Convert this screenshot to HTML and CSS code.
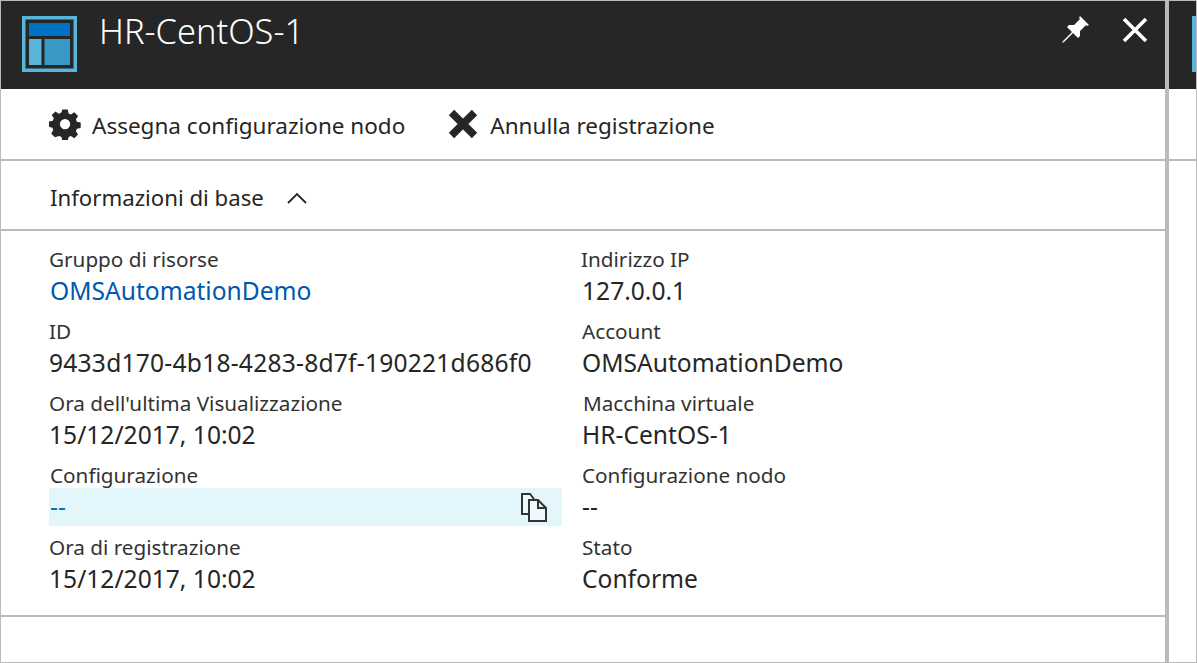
FILE: index.html
```html
<!DOCTYPE html>
<html lang="it">
<head>
  <meta charset="UTF-8" />
  <meta name="viewport" content="width=device-width, initial-scale=1" />
  <title>HR-CentOS-1</title>
  <link rel="stylesheet" href="styles.css">
</head>
<body>
  <div class="desk">
    <div class="blade">
      <header class="blade-head">
        <svg class="blade-logo" width="55" height="56" viewBox="0 0 55 56">
          <rect width="55" height="56" fill="#59b4d9"/>
          <rect x="3.500" y="3.500" width="48" height="49" fill="#262626"/>
          <rect x="7" y="7" width="41" height="13" fill="#0072c6"/>
          <rect x="7" y="23" width="12.500" height="26" fill="#59b4d9"/>
          <rect x="22.500" y="23" width="25.500" height="26" fill="#3999c6"/>
        </svg>
        <h1 class="blade-title">HR-CentOS-1</h1>
        <svg class="head-btn pin" width="28" height="28" viewBox="0 0 28 28">
          <path fill="#fff" d="M18 1l9 9-2 1-1-1-6 6 0 5-2 2-5-5-9 9-2 1 1-2 9-9-5-5 2-2 5 0 6-6-1-1z"/>
        </svg>
        <svg class="head-btn close" width="26" height="26" viewBox="0 0 26 26">
          <path stroke="#fff" stroke-width="3.600" d="M2 2l22 22M24 2L2 24"/>
        </svg>
      </header>

      <div class="commands">
        <button class="cmd">
          <svg width="32" height="32" viewBox="0 0 32 32">
            <path fill="#262626" fill-rule="evenodd" d="M13 0h6l1 4.300 2.600 1.100L26.400 3l4.200 4.200-2.400 3.800 1.100 2.600 4.300 1v6l-4.300 1-1.100 2.600 2.400 3.800-4.200 4.200-3.800-2.400-2.600 1.100-1 4.300h-6l-1-4.300-2.600-1.100L4.600 31 .4 26.800l2.400-3.800-1.100-2.600L-2 19.400v-6l4.300-1 1.100-2.600L1 6l4.200-3.800 3.800 2.400 2.600-1.100z M16 10.500a5.800 5.800 0 1 0 0 11.600a5.800 5.800 0 1 0 0-11.600z" transform="translate(1.800 1.600) scale(.89)"/>
          </svg>
          <span class="cmd-text">Assegna configurazione nodo</span>
        </button>
        <button class="cmd">
          <svg width="32" height="32" viewBox="0 0 32 32">
            <path stroke="#262626" stroke-width="7.500" d="M4.500 4.500l23 23M27.500 4.500l-23 23"/>
          </svg>
          <span class="cmd-text">Annulla registrazione</span>
        </button>
      </div>

      <div class="section-head">
        <span>Informazioni di base</span>
        <svg width="22" height="14" viewBox="0 0 22 14">
          <path fill="none" stroke="#262626" stroke-width="1.800" d="M2 12l9-9 9 9"/>
        </svg>
      </div>

      <div class="props">
        <div class="prop">
          <div class="lbl">Gruppo di risorse</div>
          <div class="val link nudge">OMSAutomationDemo</div>
        </div>
        <div class="prop">
          <div class="lbl back">Indirizzo IP</div>
          <div class="val">127.0.0.1</div>
        </div>
        <div class="prop">
          <div class="lbl">ID</div>
          <div class="val wide">9433d170-4b18-4283-8d7f-190221d686f0</div>
        </div>
        <div class="prop">
          <div class="lbl">Account</div>
          <div class="val">OMSAutomationDemo</div>
        </div>
        <div class="prop">
          <div class="lbl">Ora dell'ultima Visualizzazione</div>
          <div class="val">15/12/2017, 10:02</div>
        </div>
        <div class="prop">
          <div class="lbl nudge">Macchina virtuale</div>
          <div class="val">HR-CentOS-1</div>
        </div>
        <div class="prop">
          <div class="lbl nudge">Configurazione</div>
          <div class="val link hilite">
            <span>--</span>
            <svg width="30" height="30" viewBox="0 0 30 30">
              <path fill="#fff" fill-opacity=".4" stroke="#333" stroke-width="2" d="M9 22H2V2h8l4 5"/>
              <path fill="#fff" fill-opacity=".4" stroke="#333" stroke-width="2" d="M9 8h9l8 8v13H9z"/>
              <path fill="none" stroke="#333" stroke-width="2" d="M18 8v8h8"/>
            </svg>
          </div>
        </div>
        <div class="prop">
          <div class="lbl">Configurazione nodo</div>
          <div class="val">--</div>
        </div>
        <div class="prop">
          <div class="lbl">Ora di registrazione</div>
          <div class="val">15/12/2017, 10:02</div>
        </div>
        <div class="prop">
          <div class="lbl">Stato</div>
          <div class="val">Conforme</div>
        </div>
      </div>
    </div>

    <div class="next-blade">
      <div class="next-head"><div class="next-logo"></div></div>
      <div class="next-commands"></div>
    </div>
  </div>
</body>
</html>
```

FILE: styles.css
```css
html, body { margin:0; padding:0; height:100%; overflow:hidden; }
body { background:#fff; color:#262626; font-family:"Noto Sans", "Open Sans", sans-serif; }
.desk { display:flex; box-sizing:border-box; height:663px; border:1px solid #bbb; }
.blade { width:1164px; flex:none; }
.next-blade { flex:1; border-left:4px solid #bbb; overflow:hidden; }
.next-head { height:88px; margin-left:-4px; border-left:4px solid #505050; background:#262626; padding-top:15px; box-sizing:border-box; overflow:hidden; }
.next-logo { width:56px; height:56px; margin-left:23px; background:#59b4d9; }
.next-commands { height:70px; border-bottom:2px solid #bbb; }

.blade-head { display:flex; align-items:flex-start; height:88px; background:#262626; }
.blade-logo { margin:15px 0 0 21px; flex:none; }
.blade-title { margin:7px auto 0 22px; font-size:34.400px; font-weight:300; line-height:46px; color:#fff; }
.head-btn { flex:none; margin-top:14px; }
.pin { margin-right:32px; }
.close { margin:16px 17px 0 0; }

.commands { display:flex; align-items:center; height:70px; padding-left:48px; gap:42px; border-bottom:2px solid #bbb; }
.cmd { display:flex; align-items:center; gap:11px; padding:0; border:none; background:none; color:#262626; font:inherit; font-size:22.500px; cursor:pointer; }
.cmd-text { padding-top:2px; }

.section-head { display:flex; align-items:center; gap:22px; height:70px; padding:5px 0 0 49px; box-sizing:border-box; border-bottom:2px solid #bbb; font-size:22.200px; }

.props { display:grid; grid-template-columns:533px 1fr; grid-auto-rows:72px; align-content:start; padding:13px 0 0 48px; height:386px; box-sizing:border-box; border-bottom:2px solid #bbb; }
.lbl { height:28px; line-height:30px; font-size:20.700px; color:#333; }
.val { height:38px; line-height:38px; font-size:24.600px; color:#262626; }
.link { color:#0058ad; }
.nudge { padding-left:1px; }
.back { margin-left:-1px; }
.wide { letter-spacing:.22px; }
.hilite { display:flex; align-items:center; justify-content:space-between; width:513px; padding-left:1px; box-sizing:border-box; background:#e3f6fc; color:#0072c6; }
.hilite svg { margin-right:12px; }
```
